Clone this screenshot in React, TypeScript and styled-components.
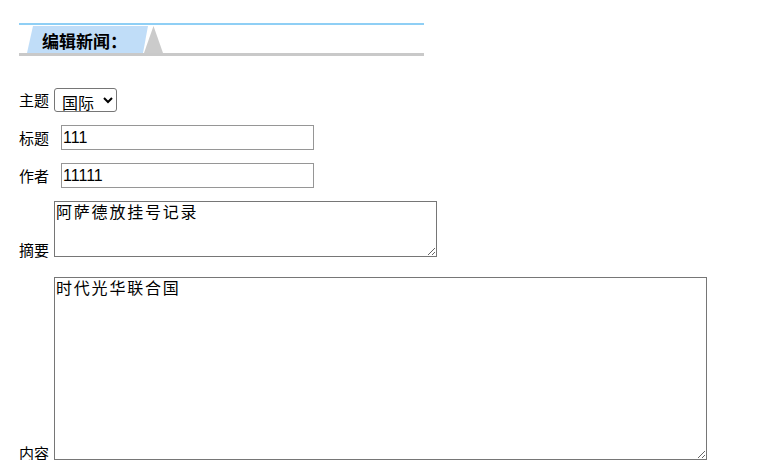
import React from 'react';
import styled, { createGlobalStyle } from 'styled-components';

const Global = createGlobalStyle`
  html, body { margin: 0; padding: 0; background: #fff; }
  body { font-family: "Noto Sans CJK SC", "Microsoft YaHei", sans-serif; color: #000; }
`;

const Page = styled.div`
  padding: 23px 0 0 19px;
  display: flex;
  flex-direction: column;
`;

const Header = styled.div`
  width: 405px;
  height: 28px;
  border-top: 2px solid #8fcff5;
  border-bottom: 3px solid #c9c9c9;
  display: flex;
  align-items: flex-end;
`;

const Tab = styled.div`
  margin-left: 8px;
  width: 121px;
  height: 27px;
  background: #c0ddf8;
  clip-path: polygon(6px 0, 100% 0, calc(100% - 5px) 100%, 0 100%);
  padding-left: 15px;
  box-sizing: border-box;
  font-size: 17px;
  font-weight: bold;
  line-height: 30px;
  white-space: nowrap;
`;

const Peak = styled.div`
  margin-left: -4px;
  width: 19px;
  height: 27px;
  background: #cbcbcb;
  clip-path: polygon(50% 0, 100% 100%, 0 100%);
`;

const Row = styled.div<{ $top: number; $bottom?: boolean }>`
  display: flex;
  align-items: ${(p) => (p.$bottom ? 'flex-end' : 'center')};
  margin-top: ${(p) => p.$top}px;
`;

const Label = styled.span<{ $drop?: boolean }>`
  width: 30px;
  font-size: 15px;
  line-height: 20px;
  white-space: nowrap;
  margin-bottom: ${(p) => (p.$drop ? '-3px' : '0')};
`;

const Select = styled.select`
  margin-left: 5px;
  width: 63px;
  height: 24px;
  font-size: 16px;
  font-family: "Noto Sans CJK SC", sans-serif;
  border: 1px solid #767676;
  border-radius: 3px;
  padding: 0 0 0 3px;
  background: #fff;
  color: #000;
`;

const Input = styled.input`
  margin-left: 12px;
  width: 253px;
  height: 25px;
  box-sizing: border-box;
  border: 1px solid #969696;
  padding: 0 1px;
  font-size: 16px;
  font-family: "Liberation Sans", Arial, sans-serif;
  color: #000;
  outline: none;
`;

const Area = styled.textarea<{ $w: number; $h: number }>`
  margin-left: 5px;
  width: ${(p) => p.$w}px;
  height: ${(p) => p.$h}px;
  box-sizing: border-box;
  border: 1px solid #767676;
  padding: 0 1px;
  font-size: 16px;
  letter-spacing: 1.8px;
  line-height: 18px;
  font-family: "Noto Sans CJK SC", monospace;
  color: #000;
  display: block;
`;

export default function App() {
  return (
    <>
      <Global />
      <Page>
        <Header>
          <Tab>编辑新闻：</Tab>
          <Peak />
        </Header>
        <Row $top={32}>
          <Label>主题</Label>
          <Select defaultValue="国际">
            <option>国内</option>
            <option>国际</option>
          </Select>
        </Row>
        <Row $top={13}>
          <Label>标题</Label>
          <Input defaultValue="111" />
        </Row>
        <Row $top={13}>
          <Label>作者</Label>
          <Input defaultValue="11111" />
        </Row>
        <Row $top={13} $bottom>
          <Label $drop>摘要</Label>
          <Area $w={383} $h={56} defaultValue="阿萨德放挂号记录" />
        </Row>
        <Row $top={20} $bottom>
          <Label $drop>内容</Label>
          <Area $w={653} $h={183} defaultValue="时代光华联合国" />
        </Row>
      </Page>
    </>
  );
}
